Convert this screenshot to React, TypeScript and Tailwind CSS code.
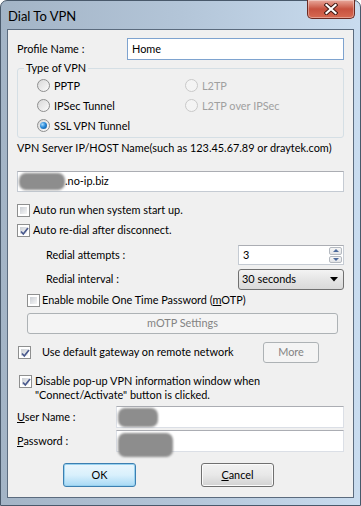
import React from 'react';

const CheckBox = ({ checked = false }: { checked?: boolean }) => (
  <span className="relative block w-[13px] h-[13px] flex-shrink-0 border border-[#8e8f8f] bg-white p-[2px]">
    <span className="block w-full h-full bg-gradient-to-br from-[#cbcfd5] to-[#f6f6f6]" />
    {checked && (
      <svg className="absolute left-[1px] top-[1px]" width="11" height="11" viewBox="0 0 11 11">
        <path d="M2 5.5 L4.3 8 L9 2" fill="none" stroke="#4a5a8e" strokeWidth="1.7" />
      </svg>
    )}
  </span>
);

const Radio = ({ checked = false, disabled = false }: { checked?: boolean; disabled?: boolean }) => (
  <span
    className={`w-[13px] h-[13px] flex-shrink-0 rounded-full border flex items-center justify-center ${
      disabled ? 'border-[#c9c9c9] bg-[#f4f4f4]' : 'border-[#8e8f8f] bg-gradient-to-br from-[#d8d8d8] to-[#fbfbfb]'
    }`}
  >
    {checked && (
      <span className="w-[7px] h-[7px] rounded-full bg-[radial-gradient(circle_at_35%_35%,_#a8dcff_0%,_#2a8ad8_45%,_#0b4f94_100%)]" />
    )}
  </span>
);

const radios = [
  { left: 'PPTP', right: 'L2TP' },
  { left: 'IPSec Tunnel', right: 'L2TP over IPSec' },
  { left: 'SSL VPN Tunnel', right: '' },
];

const Blob = ({ w, h, cls = '' }: { w: number; h: number; cls?: string }) => (
  <span
    className={`inline-block flex-shrink-0 rounded-[7px] bg-[#8d8d8d] blur-[1.2px] ${cls}`}
    style={{ width: w, height: h }}
  />
);

export default function App() {
  return (
    <div className="w-[361px] h-[506px] overflow-hidden font-['Lato',sans-serif] text-[10.9px] text-black whitespace-nowrap">
      <div className="w-full h-full flex flex-col rounded-t-[7px] border border-[#49596b] bg-gradient-to-r from-[#a3b4c6] via-[#b3c5d8] to-[#c9dcef]">
        {/* Title bar */}
        <div className="h-[28px] flex items-start justify-between pl-[7px] pr-[5px]">
          <span className="mt-[6px] text-[13px] text-black">Dial To VPN</span>
          <span className="w-[48px] h-[19px] -mt-[1px] rounded-b-[5px] border border-[#6b2a22] border-t-0 bg-gradient-to-b from-[#e8a89c] via-[#c7513f] to-[#d76a52] flex items-center justify-center shadow-[inset_0_0_0_1px_rgba(255,255,255,0.35)]">
            <svg width="14" height="12" viewBox="0 0 14 12">
              <path d="M2.5 2 L11.5 10 M11.5 2 L2.5 10" stroke="#3b1510" strokeWidth="4" strokeLinecap="square" />
              <path d="M2.5 2 L11.5 10 M11.5 2 L2.5 10" stroke="#ffffff" strokeWidth="2.2" strokeLinecap="square" />
            </svg>
          </span>
        </div>

        {/* Client area */}
        <div className="mx-[6px] h-[469px] border border-[#5b6b7e] bg-[#f0f0f0] pl-[9px] pr-[9px] flex flex-col">
          {/* Profile Name */}
          <div className="mt-[8px] h-[22px] flex items-center">
            <span className="w-[110px]">Profile Name :</span>
            <div className="flex-1 h-full border border-[#7ea3cf] bg-white pl-[4px] flex items-center">Home</div>
          </div>

          {/* Type of VPN group */}
          <div className="relative mt-[8px] h-[70px] border border-[#d5dfe5] rounded-[3px] pt-[7px] px-[19px]">
            <span className="absolute -top-[9px] left-[6px] px-[2px] bg-[#f0f0f0] leading-[16px]">Type of VPN</span>
            {radios.map((r) => (
              <div key={r.left} className="h-[20px] flex items-center">
                <div className="w-[148px] flex items-center gap-[4px]">
                  <Radio checked={r.left === 'SSL VPN Tunnel'} />
                  <span>{r.left}</span>
                </div>
                {r.right && (
                  <div className="flex items-center gap-[4px] text-[#a0a0a0]">
                    <Radio disabled />
                    <span>{r.right}</span>
                  </div>
                )}
              </div>
            ))}
          </div>

          {/* Server */}
          <div className="mt-[2px] h-[16px] flex items-center">
            VPN Server IP/HOST Name(such as 123.45.67.89 or draytek.com)
          </div>
          <div className="mt-[15px] h-[21px] border border-[#c5cbd3] border-t-[#abadb3] bg-white pl-[1px] flex items-center overflow-visible">
            <Blob w={46} h={17} />
            <span>.no-ip.biz</span>
          </div>

          <div className="mt-[10px] h-[16px] flex items-center gap-[3px]">
            <CheckBox />
            <span>Auto run when system start up.</span>
          </div>
          <div className="mt-[4px] h-[16px] flex items-center gap-[3px]">
            <CheckBox checked />
            <span>Auto re-dial after disconnect.</span>
          </div>

          {/* Redial attempts */}
          <div className="mt-[7px] h-[20px] flex items-center pl-[29px]">
            <span className="w-[192px]">Redial attempts :</span>
            <div className="flex-1 h-full border border-[#c5cbd3] border-t-[#abadb3] bg-white flex">
              <span className="flex-1 pl-[4px] leading-[18px]">3</span>
              <div className="w-[15px] flex flex-col gap-[1px] p-[1px]">
                {['M1 4 L4 1 L7 4 Z', 'M1 1 L4 4 L7 1 Z'].map((d) => (
                  <span key={d} className="flex-1 rounded-[2px] border border-[#b4b9c0] bg-gradient-to-b from-[#f6f6f6] to-[#e2e4e7] flex items-center justify-center">
                    <svg width="8" height="5" viewBox="0 0 8 5">
                      <path d={d} fill="#4d6a9c" />
                    </svg>
                  </span>
                ))}
              </div>
            </div>
          </div>

          {/* Redial interval */}
          <div className="mt-[4px] h-[21px] flex items-center pl-[29px]">
            <span className="w-[192px]">Redial interval :</span>
            <div className="flex-1 h-full rounded-[3px] border border-[#707070] bg-gradient-to-b from-[#f3f3f3] via-[#e5e5e5] to-[#d9d9d9] flex items-center justify-between pl-[3px] pr-[5px]">
              <span>30 seconds</span>
              <svg width="8" height="5" viewBox="0 0 8 5">
                <path d="M0 0 L8 0 L4 4.5 Z" fill="#000" />
              </svg>
            </div>
          </div>

          {/* mOTP */}
          <div className="mt-[2px] h-[16px] flex items-center gap-[2px] pl-[10px]">
            <CheckBox />
            <span>
              Enable mobile One Time Password (<span className="underline">m</span>OTP)
            </span>
          </div>
          <div className="mt-[5px] ml-[10px] mr-[6px] h-[21px] rounded-[3px] border border-[#adb2b5] bg-[#f4f4f4] flex items-center justify-center text-[#838383]">
            mOTP Settings
          </div>

          {/* Default gateway */}
          <div className="mt-[8px] h-[21px] flex items-center pl-[1px]">
            <CheckBox checked />
            <span className="ml-[11px] w-[221px]">Use default gateway on remote network</span>
            <span className="w-[56px] h-full rounded-[3px] border border-[#adb2b5] bg-[#f4f4f4] flex items-center justify-center text-[#838383]">
              More
            </span>
          </div>

          {/* Disable popup */}
          <div className="mt-[12px] h-[27px] flex items-start pl-[2px] leading-[13.5px]">
            <CheckBox checked />
            <span className="ml-[3px] -mt-[1px]">
              Disable pop-up VPN information window when
              <br />
              "Connect/Activate" button is clicked.
            </span>
          </div>

          {/* User name */}
          <div className="mt-[4px] h-[22px] flex items-center">
            <span className="w-[99px]">
              <span className="underline">U</span>ser Name :
            </span>
            <div className="flex-1 h-full border border-[#dbdfe6] border-t-[#abadb3] bg-white pl-[1px] flex items-center">
              <Blob w={40} h={19} />
            </div>
          </div>
          <div className="mt-[2px] h-[22px] flex items-center">
            <span className="w-[99px]">
              <span className="underline">P</span>assword :
            </span>
            <div className="flex-1 h-full border border-[#dbdfe6] border-t-[#abadb3] bg-white pl-[1px] flex items-start">
              <Blob w={55} h={24} cls="mt-[2px]" />
            </div>
          </div>

          {/* Buttons */}
          <div className="mt-[11px] h-[24px] flex items-center pl-[46px] gap-[65px]">
            <span className="w-[73px] h-full rounded-[3px] border border-[#3c7fb1] bg-gradient-to-b from-[#eaf6fd] via-[#d9f0fc] to-[#a7d9f5] shadow-[inset_0_0_0_1px_#98d1ef] flex items-center justify-center">
              OK
            </span>
            <span className="w-[73px] h-full rounded-[3px] border border-[#707070] bg-gradient-to-b from-[#f2f2f2] via-[#e8e8e8] to-[#d2d2d2] shadow-[inset_0_0_0_1px_#fbfbfb] flex items-center justify-center">
              <span>
                <span className="underline">C</span>ancel
              </span>
            </span>
          </div>
        </div>
      </div>
    </div>
  );
}
